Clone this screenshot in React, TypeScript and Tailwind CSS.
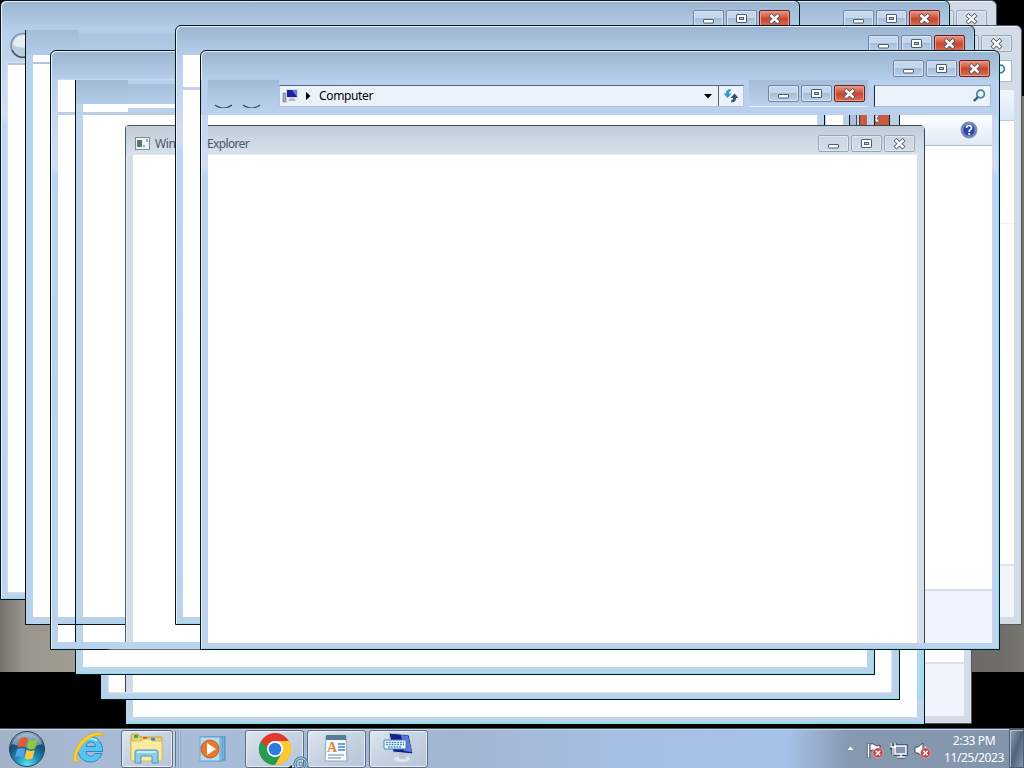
import { ReactNode } from "react";
import clsx from "clsx";

type Kind = "min" | "max" | "close";

function CaptionGlyph({ kind }: { kind: Kind }) {
  return (
    <svg width="15" height="12" viewBox="0 0 15 12" fill="none">
      {kind === "min" && (
        <rect x="2.5" y="6.5" width="10" height="3.500" rx="0.5" fill="#fff" stroke="#4c5d76" />
      )}
      {kind === "max" && (
        <>
          <rect x="2.5" y="1.5" width="10" height="8" rx="0.5" fill="#fff" stroke="#4c5d76" />
          <rect x="5.5" y="4.5" width="4" height="2" fill="#b4c8df" stroke="#4c5d76" />
        </>
      )}
      {kind === "close" && (
        <>
          <path d="M3 1.500 12 10M12 1.500 3 10" stroke="#4d5365" strokeWidth="4.200" />
          <path d="M3.500 2 11.500 9.500M11.500 2 3.500 9.500" stroke="#fff" strokeWidth="2.400" />
        </>
      )}
    </svg>
  );
}

function CaptionButton({ kind, inactive }: { kind: Kind; inactive?: boolean }) {
  return (
    <div
      className={clsx(
        "flex h-[17px] w-[31px] items-center justify-center rounded-[2px] border",
        inactive
          ? "border-[#97a5b7] bg-[#cfd9e5]/40 shadow-[inset_0_0_0_1px_#dfe7ef]"
          : kind === "close"
            ? "border-[#6b1d22] bg-linear-to-b from-[#e59a86] from-0% via-[#c9452b] via-52% to-[#d97052] shadow-[inset_0_0_0_1px_#eaa091]"
            : "border-[#6f84a3] bg-linear-to-b from-[#c5d7ec] from-45% via-[#a6bdd8] via-50% to-[#bcd2ec] shadow-[inset_0_0_0_1px_#d7e5f5]",
      )}
    >
      <CaptionGlyph kind={kind} />
    </div>
  );
}

function CaptionButtons({ inactive }: { inactive?: boolean }) {
  return (
    <div className="flex gap-[2px]">
      <CaptionButton kind="min" inactive={inactive} />
      <CaptionButton kind="max" inactive={inactive} />
      <CaptionButton kind="close" inactive={inactive} />
    </div>
  );
}

interface FrameProps {
  className: string;
  inactive?: boolean;
  titleClass?: string;
  children?: ReactNode;
}

function Frame({ className, inactive, titleClass = "h-[29px]", children }: FrameProps) {
  return (
    <div
      className={clsx(
        "absolute flex flex-col overflow-hidden rounded-t-[6px] border",
        inactive
          ? "border-[#4c5664] bg-[#d3dce6] shadow-[inset_1px_1px_0_#edf2f7]"
          : "border-[#07151d] bg-[linear-gradient(180deg,#9bb4cf_0px,#abc5e1_18px,#b8d0ee_32px,#c3d5ee_60px,#d3def2_116px,#bcd5f2_124px,#bcd3eb_100%)] shadow-[inset_1px_1px_0_#e6f3fc,inset_-1px_-1px_0_#8fdcec]",
        className,
      )}
    >
      <div className={clsx("flex shrink-0 justify-end pr-[9px] pt-[9px]", titleClass)}>
        <CaptionButtons inactive={inactive} />
      </div>
      {children}
    </div>
  );
}

function SearchIcon() {
  return (
    <svg width="14" height="14" viewBox="0 0 14 14" fill="none">
      <circle cx="8.6" cy="5" r="3.8" fill="#eaf6fd" stroke="#4a7f9f" strokeWidth="1.700" />
      <path d="M6 7.8 1.8 12" stroke="#345b7d" strokeWidth="2.4" />
    </svg>
  );
}

function ComputerIcon() {
  return (
    <svg width="18" height="16" viewBox="0 0 18 16">
      <rect x="1" y="5" width="3" height="9" fill="#a0aab4" stroke="#717d87" strokeWidth=".6" />
      <rect x="4" y="1" width="12" height="9" fill="#d3d9e4" />
      <rect x="5" y="2" width="10" height="7" fill="#1b229c" />
      <path d="M10 2h5v7z" fill="#6a7de0" />
      <path d="M8 10h4l2 3H6z" fill="#b5bfc9" />
    </svg>
  );
}

/* Slices of repaint trails left in the strip under the address bar */
function GhostStrip() {
  return (
    <div className="flex h-[10px]">
      <div className="w-[609px] bg-white" />
      <div className="w-[7px] bg-[#bed4ec]" />
      <div className="w-px bg-[#07151d]" />
      <div className="w-[18px] border-l border-[#b9def0] bg-white" />
      <div className="w-[6px] bg-[#bdd2ea]" />
      <div className="w-px bg-[#07151d]" />
      <div className="w-[6px] bg-[#a9c1dc]" />
      <div className="w-px bg-[#33485e]" />
      <div className="w-[2px] bg-[#c9dbee]" />
      <div className="w-px bg-[#5b2430]" />
      <div className="w-[7px] bg-[#cc5a3e]" />
      <div className="w-[7px] bg-[#bed2e8]" />
      <div className="w-[16px] border-x border-[#1e1418] bg-[#cc5a40]">
        <svg width="8" height="10" viewBox="0 0 8 10">
          <path d="M0 0H4.500L2 3.5 5 7H0Z" fill="#fff" stroke="#4d5365" strokeWidth=".8" />
        </svg>
      </div>
      <div className="w-[9px] bg-[#b6d3e8]" />
      <div className="w-px bg-[#07151d]" />
      <div className="flex-1 bg-[#fafcff]" />
    </div>
  );
}

function AddressRow() {
  return (
    <div className="-mr-px flex h-[35px] shrink-0 items-start bg-[#b9d1ee] pl-[7px]">
      <div className="h-[27px] w-[71px] bg-linear-to-b from-[#9fb9d6] via-[#adc6e2] to-[#b7cfe9] shadow-[0_0_2px_#a9c2e0]">
        <svg width="70" height="28" viewBox="0 0 70 28" fill="none" stroke="#35485e" strokeWidth="1.2">
          <path d="M7 25Q15.500 31 24 25M35 25Q43.500 31 52 25" />
        </svg>
      </div>
      <div className="mt-[5px] flex h-[22px] w-[465px] items-center border border-t-[#56687c] border-[#b1c6dc] bg-[#ebf2fa] pl-[2px]">
        <ComputerIcon />
        <svg className="ml-[6px]" width="5" height="8" viewBox="0 0 5 8">
          <path d="M0 0 4.500 4 0 8Z" fill="#000" />
        </svg>
        <span className="ml-[8px] text-[12px] leading-none tracking-[-0.35px] text-black">Computer</span>
        <svg className="ml-auto mr-[6px]" width="8" height="5" viewBox="0 0 8 5">
          <path d="M0 0H8L4 4.500Z" fill="#000" />
        </svg>
        <div className="flex h-full w-[25px] items-center justify-center border-l border-[#56687c]">
          <svg width="16" height="14" viewBox="0 0 16 14">
            <path d="M7.500 0C4 .3 3 2 3 4.500H.5L4.500 9 8.500 4.500H6C6 3 6.500 2.200 8 2Z" fill="#3a93cc" />
            <path d="M8.500 13.500C12 13.200 13 11.500 13 9H15.500L11.500 4.500 7.500 9H10C10 10.500 9.500 11.300 8 11.500Z" fill="#315773" />
          </svg>
        </div>
      </div>
      <div className="ml-[5px] flex h-[27px] w-[119px] justify-end border-b border-[#e5f2fd] bg-linear-to-b from-[#a5bdd9] to-[#b9d1ed] pr-[3px] pt-[5px]">
        <CaptionButtons />
      </div>
      <div className="ml-[6px] mt-[5px] flex h-[22px] w-[117px] items-center justify-end border border-[#a5bdd4] border-l-[#0e3147] border-t-[#8a9eb4] bg-[#ebf2fa] pr-[4px]">
        <SearchIcon />
      </div>
    </div>
  );
}

function ActiveExplorer() {
  return (
    <Frame className="left-[200px] top-[50px] h-[600px] w-[800px]">
      <AddressRow />
      <div className="mb-[6px] ml-[7px] mr-[7px] flex flex-1 flex-col bg-white">
        <GhostStrip />
        <div className="flex flex-1">
          <div className="flex w-[717px] flex-col rounded-tr-[5px] border-r border-t border-[#3c4754] bg-[#d6dee8]">
            <div className="flex h-[28px] shrink-0 items-center justify-between bg-linear-to-b from-[#c1ccd6] to-[#d7e2ee] pr-[9px] pt-[7px]">
              <span className="-ml-px text-[12px] leading-none tracking-[-0.65px] text-[#4a5666]">Explorer</span>
              <CaptionButtons inactive />
            </div>
            <div className="mr-[7px] flex-1 border-t border-[#e8eef5] bg-white" />
          </div>
          <div className="-mt-[10px] flex flex-1 flex-col">
            <div className="flex h-[31px] items-center justify-end border-b border-[#b0bfd3] bg-linear-to-b from-white via-[#edf4fc] to-[#dfe9f6] pr-[14px]">
              <svg width="18" height="18" viewBox="0 0 18 18">
                <circle cx="9" cy="9" r="7.700" fill="#2848a8" stroke="#8590a8" strokeWidth="1.500" />
                <circle cx="9" cy="9" r="6.300" fill="none" stroke="#c3cee7" strokeWidth=".7" />
                <path d="M6.500 7Q6.500 4.500 9 4.500T11.500 7Q11.500 8.500 9.300 9.500V11" fill="none" stroke="#fff" strokeWidth="1.700" />
                <rect x="8.300" y="12" width="1.900" height="1.900" fill="#fff" />
              </svg>
            </div>
            <div className="flex-1 bg-white" />
            <div className="h-[54px] border-t-2 border-[#d9dfe8] bg-[#f0f4fe]" />
          </div>
        </div>
      </div>
    </Frame>
  );
}

function TaskButton({ className, children }: { className: string; children: ReactNode }) {
  return (
    <div
      className={clsx(
        "flex h-[38px] shrink-0 items-center justify-center rounded-[3px] border border-[#5c6b80] bg-linear-to-br from-[#dde6f0] via-[#c5d2e1] to-[#b5c5d8] shadow-[inset_0_0_0_1px_#e6edf5]",
        className,
      )}
    >
      {children}
    </div>
  );
}

function StartOrb() {
  return (
    <svg width="38" height="38" viewBox="0 0 38 38">
      <defs>
        <radialGradient id="orb" cx=".5" cy=".95" r=".9">
          <stop offset="0" stopColor="#56e4f5" />
          <stop offset=".4" stopColor="#1b87b4" />
          <stop offset=".75" stopColor="#1b496f" />
          <stop offset="1" stopColor="#8fa8be" />
        </radialGradient>
      </defs>
      <circle cx="19" cy="19" r="17.500" fill="url(#orb)" stroke="#26455f" />
      <path d="M4 14A16 16 0 0 1 34 14Q19 20 4 14Z" fill="#d4e3ee" opacity=".45" />
      <path d="M12 9Q16 6 19.500 8.500L17.500 17.500Q13.500 15.500 9.500 18Z" fill="#e9582a" />
      <path d="M21 9Q25 11.500 29.500 9.500L27 18.500Q23 20.500 19 18Z" fill="#91c83d" />
      <path d="M9 19.500Q13.500 17 17 19.300L15 27.500Q11 25 7 27.500Z" fill="#52a5e6" />
      <path d="M18.500 19.800Q22.500 22 26.700 20L24.500 28.500Q20.500 30.500 16.500 28.500Z" fill="#fcc93a" />
    </svg>
  );
}

function IeIcon() {
  return (
    <svg width="34" height="34" viewBox="0 0 34 34" fill="none">
      <path
        d="M30 22.500C28 28 24 31 18.500 31 11.500 31 6 25.500 6 18.500S11.500 6 18.500 6 31 11.500 30.500 20.500H14C14 23.500 16.500 25.200 19 25.200 21 25.200 22.300 24 23 22.500ZM14 15.500H23.500C23 12.500 21 11 18.700 11S14.500 13 14 15.500Z"
        fill="#58c4ef"
        fillRule="evenodd"
        stroke="#2889bf"
      />
      <path d="M10 11Q18 5 25 9.500" stroke="#b9effd" strokeWidth="1.500" />
      <path d="M31 3C24 -1 13 4 7 12.500 2 20 0 28 2.500 31L6.500 30.500C3.500 28 4.500 22 10 14.500 16 7 24 2.500 31 5Z" fill="#f6cf38" stroke="#d9a821" strokeWidth=".7" />
    </svg>
  );
}

function FolderIcon() {
  return (
    <svg width="34" height="32" viewBox="0 0 34 32">
      <path d="M1 3Q1 1 3 1H8L10 4H31Q32 4 32 6V27H1Z" fill="#e8cd74" stroke="#c3a247" />
      <rect x="4" y="2" width="4" height="3" fill="#3cab49" />
      <rect x="13" y="4" width="4" height="3" fill="#cf502f" />
      <rect x="21" y="5" width="4" height="3" fill="#3b83c0" />
      <path d="M1 8H11L13 6H20L22 8H32V28H1Z" fill="#f9ea9f" stroke="#d9c063" />
      <path d="M5 30V19Q5 17 7 17H26Q28 17 28 19V30H22V23H11V30Z" fill="#8bcdea" stroke="#4a97bb" />
      <path d="M7 19H26" stroke="#dbf4fb" strokeWidth="1.500" />
    </svg>
  );
}

function MediaIcon() {
  return (
    <svg width="28" height="28" viewBox="0 0 28 28">
      <rect x="7" y="2" width="19" height="23" fill="#7bb0d8" stroke="#4d88b4" />
      <rect x="4" y="2" width="19" height="24" fill="#9dcae8" stroke="#5f9cc6" />
      <rect x="1" y="2" width="20" height="24" fill="#b4dcf3" stroke="#68a5cd" />
      <circle cx="11" cy="14" r="9" fill="#ea782a" stroke="#c45a20" />
      <path d="M8 8 17 14 8 20Z" fill="#fff" />
    </svg>
  );
}

function ChromeIcon() {
  return (
    <svg width="34" height="34" viewBox="0 0 34 34">
      <circle cx="17" cy="17" r="16" fill="#e0392d" />
      <path d="M3.100 9A16 16 0 0 0 17 33L24 20.900 17 17H10Z" fill="#249d53" />
      <path d="M17 33A16 16 0 0 0 31 9H17L24 21Z" fill="#fdca32" />
      <circle cx="17" cy="17" r="8" fill="#fff" />
      <circle cx="17" cy="17" r="6.300" fill="#2f78df" />
    </svg>
  );
}

function WordpadIcon() {
  return (
    <svg width="28" height="30" viewBox="0 0 28 30">
      <path d="M3 2H23L26 28H4Z" fill="#bac7d5" />
      <path d="M3 2H23L24 27H2Z" fill="#f5fafe" stroke="#94a9bf" />
      <path d="M3 1H23V6H3Z" fill="#587b9c" />
      <text x="4" y="18" fontSize="14" fontWeight="700" fontFamily="Liberation Serif, serif" fill="#dd8734">
        A
      </text>
      <path d="M15 10H22M15 13H22M15 16H22" stroke="#457fc4" strokeWidth="1.500" />
      <path d="M5 21H21M5 24H18" stroke="#9eb0c4" strokeWidth="1.500" />
    </svg>
  );
}

function KeyboardIcon() {
  return (
    <svg width="32" height="32" viewBox="0 0 32 32">
      <ellipse cx="19" cy="27" rx="8" ry="3" fill="#e0e5e9" />
      <path d="M16 21 22 20 23 27H16Z" fill="#bec7cf" />
      <path d="M6 1 26 3 30 22 10 20Z" fill="#15208e" stroke="#c2cddc" />
      <path d="M18 3 25 4 29 20 21 19Z" fill="#6077d9" />
      <rect x="1" y="8" width="22" height="9" rx="1" fill="#f1f9fe" stroke="#397fb7" />
      <path d="M3 10.500H21M3 12.700H21M5 15H19" stroke="#3688c4" strokeWidth="1.300" strokeDasharray="1.800 1" />
    </svg>
  );
}

function TrayError({ x, y }: { x: number; y: number }) {
  return (
    <>
      <circle cx={x} cy={y} r="5" fill="#d2403c" stroke="#f3d0cf" strokeWidth=".5" />
      <path d={`M${x - 2.2} ${y - 2.2}l4.400 4.400m0 -4.400l-4.400 4.400`} stroke="#fff" strokeWidth="1.600" />
    </>
  );
}

function Tray() {
  return (
    <div className="flex h-full items-center">
      <svg width="9" height="5" viewBox="0 0 9 5">
        <path d="M4.500 0 8.500 4.500H.5Z" fill="#fff" stroke="#53627a" strokeWidth=".5" />
      </svg>
      <svg className="ml-[11px] mt-[3px]" width="18" height="17" viewBox="0 0 18 17" fill="none">
        <path d="M2.500 1V16" stroke="#3b495e" strokeWidth="3.400" />
        <path d="M4 2Q7 1 9 3T14 3V10Q11 11 9 9T4 9Z" fill="#fff" stroke="#3b495e" />
        <path d="M2.500 1.500V15.500" stroke="#fff" strokeWidth="1.700" />
        <TrayError x={12} y={11} />
      </svg>
      <svg className="ml-[6px] mt-[3px]" width="18" height="17" viewBox="0 0 18 17" fill="none">
        <rect x="5" y="4" width="11" height="8" fill="#738299" stroke="#334259" strokeWidth="3.400" />
        <path d="M7 15H15M11 12V15M1 1V6H5V1M3 6V13" stroke="#334259" strokeWidth="3" />
        <rect x="5" y="4" width="11" height="8" fill="#8395ae" stroke="#fff" strokeWidth="1.500" />
        <path d="M7 15H15M11 12V15" stroke="#fff" strokeWidth="1.500" />
        <path d="M1 1V5H5V1M3 5V13" stroke="#fff" strokeWidth="1.300" />
      </svg>
      <svg className="ml-[6px] mt-[3px]" width="18" height="17" viewBox="0 0 18 17" fill="none">
        <path d="M1 5H4L9 1V15L4 11H1Z" fill="#fff" stroke="#3b495e" />
        <path d="M11 4Q13 8 11 12" stroke="#fff" />
        <TrayError x={11.5} y={11} />
      </svg>
    </div>
  );
}

function Taskbar() {
  return (
    <div className="absolute inset-x-0 bottom-0 flex h-[40px] overflow-hidden border-t border-[#4a5260] bg-[linear-gradient(90deg,#a3b2c9_0%,#a9bcd7_12%,#a7bcd8_22%,#a2b6d2_45%,#a5bfe2_60%,#a4c2e7_77%,#8798b1_83%,#8293ac_100%)] shadow-[inset_0_1px_0_#cbd8e7]">
      <div className="flex w-[54px] shrink-0 items-center justify-center">
        <StartOrb />
      </div>
      <div className="flex w-[67px] shrink-0 items-center justify-center pb-[2px] pl-[3px]">
        <IeIcon />
      </div>
      <TaskButton className="mt-px w-[52px]">
        <FolderIcon />
      </TaskButton>
      <div className="mt-px h-[38px] w-[3px] shrink-0 rounded-r-[3px] border-r border-[#62748c] bg-[#c7d3e2]" />
      <div className="ml-[2px] mt-px h-[38px] w-[3px] shrink-0 border-x border-x-[#95a9c3] bg-[#b8c8dd]" />
      <div className="flex w-[64px] shrink-0 items-center justify-center pt-px">
        <MediaIcon />
      </div>
      <div className="mt-px flex gap-[3px]">
        <TaskButton className="w-[59px]">
          <ChromeIcon />
        </TaskButton>
        <TaskButton className="w-[59px]">
          <WordpadIcon />
        </TaskButton>
        <TaskButton className="w-[59px] pb-[2px]">
          <KeyboardIcon />
        </TaskButton>
      </div>
      <div className="ml-auto flex items-center">
        <Tray />
        <div className="ml-[11px] w-[62px] text-center text-[12px] leading-[17px] tracking-[-0.4px] text-white">
          <p>2:33 PM</p>
          <p className="whitespace-nowrap">11/25/2023</p>
        </div>
        <div className="ml-[4px] h-full w-[15px] border border-[#4d5d73] bg-linear-to-br from-[#97a6b8] via-[#526379] to-[#8396ae] shadow-[inset_1px_1px_0_#aebccd]" />
      </div>
      {/* Busy cursor */}
      <svg className="absolute left-[286px] top-[26px]" width="24" height="14" viewBox="0 0 24 14" fill="none">
        <path d="M0 14 6 10V14Z" fill="#17212a" />
        <circle cx="15" cy="9" r="6" stroke="#3a6f88" strokeWidth="3" />
        <circle cx="15" cy="9" r="6" stroke="#9dc9d8" strokeWidth="1.300" />
        <circle cx="15" cy="9" r="2" stroke="#527e95" />
      </svg>
    </div>
  );
}

export default function App() {
  return (
    <div className="relative h-[768px] w-[1024px] overflow-hidden bg-black font-['Noto_Sans','Open_Sans',sans-serif]">
      {/* Wallpaper */}
      <div className="absolute left-0 top-[96px] h-[576px] w-full bg-[linear-gradient(90deg,#77736e_0px,#9a968d_25px,#a19c92_76px,#6c6864_900px,#6f6d69_1000px,#77766f_1024px)]" />

      {/* Unfocused windows at the back */}
      <Frame inactive className="left-[197px] top-0 h-[600px] w-[800px]" />
      <Frame inactive className="left-[222px] top-[25px] h-[600px] w-[800px]">
        <div className="mr-[9px] flex h-[35px] items-start justify-end pt-[5px]">
          <div className="flex h-[22px] w-[110px] items-center justify-end border border-[#a8b7c6] bg-white pr-[5px]">
            <SearchIcon />
          </div>
        </div>
        <div className="mx-[7px] mb-[7px] flex flex-1 flex-col bg-white">
          <div className="h-[31px] border-b border-[#bccadb] bg-linear-to-b from-[#f2f7fd] to-[#dce7f4]" />
          <div className="h-[103px] border-b border-[#edf1f5]" />
          <div className="flex-1" />
          <div className="h-[53px] border-t-2 border-[#dde3e9] bg-[#f0f5fc]" />
        </div>
      </Frame>
      <Frame inactive className="left-[172px] top-[124px] h-[600px] w-[800px]">
        <div className="mx-[7px] mb-[7px] flex flex-1 flex-col bg-white">
          <div className="flex-1" />
          <div className="h-[54px] border-t-2 border-[#dde3e9] bg-[#f0f4fc]" />
        </div>
      </Frame>

      <Frame className="left-[150px] top-0 h-[600px] w-[800px]" />
      <Frame className="left-0 top-0 h-[600px] w-[800px]" titleClass="h-[62px]">
        <div className="mb-[7px] ml-[7px] mr-[6px] flex-1 border-t-2 border-[#b4c4d9] bg-white shadow-[0_0_3px_#e6effa]" />
      </Frame>
      <svg className="absolute left-[9px] top-[32px]" width="27" height="27" viewBox="0 0 27 27">
        <circle cx="14" cy="13.500" r="12" fill="#bdcddd" stroke="#7f90a6" strokeWidth="1.600" />
        <path d="M4 13A10 10 0 0 1 24 13Q14 18 4 13Z" fill="#e6edf4" />
        <path d="M3 18A12 12 0 0 0 17 25" fill="none" stroke="#364d68" strokeWidth="1.300" />
      </svg>

      {/* Second trail window, repainted without its top edge */}
      <div className="absolute left-[25px] top-[30px] flex h-[595px] w-[800px] flex-col border-b border-l border-[#07151d] bg-[#bad2eb]">
        <div className="flex h-[25px] shrink-0">
          <div className="w-[53px] bg-linear-to-b from-[#a3bcd9] to-[#b3cbe7]" />
          <div className="flex-1 border-t-4 border-[#b3cce9] bg-linear-to-b from-[#a9c2df] to-[#b4cce7]" />
        </div>
        <div className="ml-[7px] h-[7px] shrink-0 bg-white" />
        <div className="ml-[7px] h-[2px] shrink-0 bg-[#b4c4d9]" />
        <div className="mb-[7px] ml-[7px] flex-1 bg-white" />
      </div>

      <Frame className="left-[50px] top-[50px] h-[600px] w-[800px]">
        <div className="mx-[7px] h-[32px] shrink-0 bg-white shadow-[0_0_2px_#e6effa]" />
        <div className="mx-[7px] h-[3px] shrink-0 bg-[#bdcfe6]" />
        <div className="mx-[7px] mb-[7px] flex flex-1 flex-col justify-end bg-white">
          <div className="h-[7px] bg-[#b5d3ec]" />
          <div className="mb-[17px] h-px bg-[#07151d]" />
        </div>
      </Frame>

      <div className="absolute left-[75px] top-[80px] flex h-[595px] w-[800px] flex-col border-x border-b border-[#07151d] bg-[#bad5ec] shadow-[inset_-1px_-1px_0_#8fdcec]">
        <div className="flex h-[24px] shrink-0">
          <div className="w-[52px] bg-linear-to-b from-[#9eb8d4] to-[#b3cbe7]" />
          <div className="flex-1 border-t-4 border-[#b5cfec] bg-linear-to-b from-[#a5bfdc] to-[#b5cde8]" />
        </div>
        <div className="ml-[7px] flex h-[8px] shrink-0">
          <div className="w-[45px] bg-white" />
          <div className="flex-1 border-t-4 border-white bg-[#bcd2ec]" />
        </div>
        <div className="h-[3px] shrink-0 bg-[#bacee5]" />
        <div className="mx-[7px] mb-[7px] flex-1 bg-white" />
        {/* Bottom edges of the windows behind show through */}
        <div className="absolute bottom-[49px] left-0 right-0 h-[8px] border-b border-[#07151d] bg-[#b5d3ec]" />
        <div className="absolute -left-px bottom-[24px] right-0 h-[8px] border-b border-[#07151d] bg-[#b7d4ee]" />
      </div>

      {/* Lower trails */}
      <div className="absolute left-[101px] top-[650px] h-[50px] w-[799px] border-b border-r border-[#07151d] bg-[#bad1eb] shadow-[inset_-1px_-1px_0_#9ddaec]">
        <div className="mx-[8px] h-[42px] bg-white shadow-[0_0_3px_#fff]" />
      </div>
      <div className="absolute left-[76px] top-[650px] h-[25px] w-[799px] border-b border-r border-[#07151d] bg-[#b5d6eb] shadow-[inset_-1px_-1px_0_#8fdcec]">
        <div className="mx-[7px] h-[17px] bg-white" />
      </div>
      <div className="absolute left-[126px] top-[700px] h-[24px] w-[799px] border-r border-[#07151d] bg-[#bdd6ec] shadow-[inset_0_-2px_0_#8fdcec]">
        <div className="mx-[7px] h-[17px] bg-white" />
      </div>
      <div className="absolute left-[900px] top-[650px] h-[50px] w-[25px] border-r border-[#07151d] bg-white pl-[17px]">
        <div className="h-full bg-[#a9daef]" />
      </div>
      <div className="absolute left-[125px] top-[675px] h-[17px] w-[8px] border-l border-[#33404e] bg-[#d2dce8]" />

      <div className="absolute left-[125px] top-[125px] flex h-[517px] w-[700px] flex-col rounded-tl-[4px] border-l border-t border-[#4c5664] bg-[#d5dde7] shadow-[inset_1px_1px_0_#edf2f7]">
        <div className="flex h-[29px] shrink-0 items-center gap-[5px] bg-linear-to-b from-[#c1ccd6] to-[#d7e2ee] pl-[9px] pt-[6px]">
          <svg width="15" height="13" viewBox="0 0 15 13">
            <rect x=".5" y=".5" width="14" height="12" fill="#eef3f6" stroke="#7c8b99" />
            <rect x="2" y="3" width="5" height="7" fill="#56786f" />
            <path d="M8 9H10M12 2V5" stroke="#53646f" />
          </svg>
          <span className="text-[12px] leading-none tracking-[-0.35px] text-[#4a5666]">Windows</span>
        </div>
        <div className="ml-[7px] flex-1 bg-white" />
      </div>

      <Frame className="left-[175px] top-[25px] h-[600px] w-[800px]">
        <div className="mx-[7px] h-[32px] shrink-0 bg-white" />
        <div className="mx-[7px] h-[3px] shrink-0 bg-[#c5d1e3]" />
        <div className="mx-[7px] mb-[7px] flex-1 bg-white" />
      </Frame>

      <ActiveExplorer />
      <Taskbar />
    </div>
  );
}
